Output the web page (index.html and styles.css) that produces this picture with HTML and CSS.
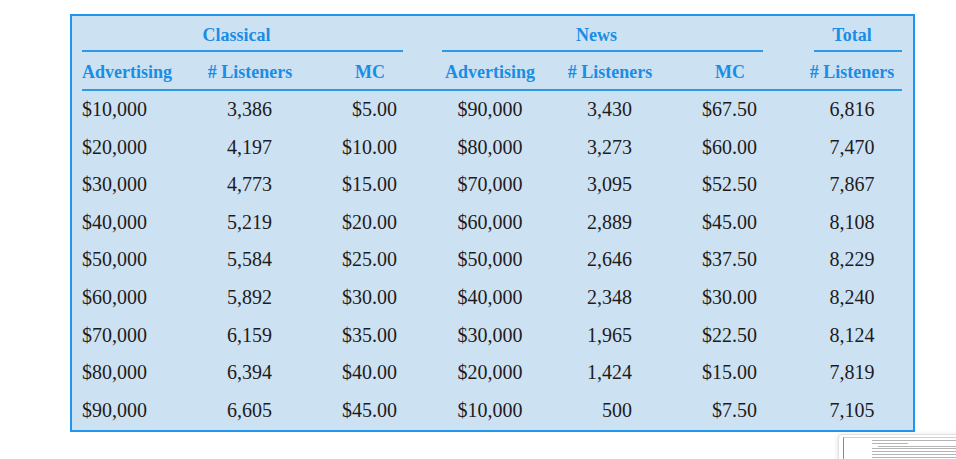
FILE: index.html
```html
<!DOCTYPE html>
<html>
<head>
<meta charset="utf-8">
<link rel="stylesheet" href="styles.css">
</head>
<body>
<div class="page">
  <div class="table">
    <div class="grp g-classical">Classical</div>
    <div class="grp g-news">News</div>
    <div class="grp g-total">Total</div>

    <div class="hd h1">Advertising</div>
    <div class="hd"># Listeners</div>
    <div class="hd">MC</div>
    <div class="hd">Advertising</div>
    <div class="hd"># Listeners</div>
    <div class="hd">MC</div>
    <div class="hd h7"># Listeners</div>

    <div class="c1">$10,000</div><div class="c2">3,386</div><div class="c3">$5.00</div><div class="c4">$90,000</div><div class="c5">3,430</div><div class="c6">$67.50</div><div class="c7">6,816</div>
    <div class="c1">$20,000</div><div class="c2">4,197</div><div class="c3">$10.00</div><div class="c4">$80,000</div><div class="c5">3,273</div><div class="c6">$60.00</div><div class="c7">7,470</div>
    <div class="c1">$30,000</div><div class="c2">4,773</div><div class="c3">$15.00</div><div class="c4">$70,000</div><div class="c5">3,095</div><div class="c6">$52.50</div><div class="c7">7,867</div>
    <div class="c1">$40,000</div><div class="c2">5,219</div><div class="c3">$20.00</div><div class="c4">$60,000</div><div class="c5">2,889</div><div class="c6">$45.00</div><div class="c7">8,108</div>
    <div class="c1">$50,000</div><div class="c2">5,584</div><div class="c3">$25.00</div><div class="c4">$50,000</div><div class="c5">2,646</div><div class="c6">$37.50</div><div class="c7">8,229</div>
    <div class="c1">$60,000</div><div class="c2">5,892</div><div class="c3">$30.00</div><div class="c4">$40,000</div><div class="c5">2,348</div><div class="c6">$30.00</div><div class="c7">8,240</div>
    <div class="c1">$70,000</div><div class="c2">6,159</div><div class="c3">$35.00</div><div class="c4">$30,000</div><div class="c5">1,965</div><div class="c6">$22.50</div><div class="c7">8,124</div>
    <div class="c1">$80,000</div><div class="c2">6,394</div><div class="c3">$40.00</div><div class="c4">$20,000</div><div class="c5">1,424</div><div class="c6">$15.00</div><div class="c7">7,819</div>
    <div class="c1">$90,000</div><div class="c2">6,605</div><div class="c3">$45.00</div><div class="c4">$10,000</div><div class="c5">500</div><div class="c6">$7.50</div><div class="c7">7,105</div>
  </div>

  <div class="thumb">
    <div class="sheet">
      <div class="tl w1"></div>
      <div class="tl w2"></div>
      <div class="tl w3 ind"></div>
      <div class="tl w4"></div>
      <div class="tl w4"></div>
      <div class="tl w4"></div>
      <div class="tl w4"></div>
    </div>
  </div>
</div>
</body>
</html>
```

FILE: styles.css
```css
html, body {
  margin: 0;
  padding: 0;
  background: #ffffff;
  overflow: hidden;
}

.page {
  width: 956px;
  height: 459px;
  padding: 14px 0 0 70px;
  box-sizing: border-box;
  font-family: "Liberation Serif", "Times New Roman", serif;
}

.table {
  width: 845px;
  box-sizing: border-box;
  border: 2px solid #2196ee;
  background: #cce2f3;
  padding: 0 11px 1px 10px;
  display: grid;
  grid-template-columns: 108px repeat(5, 120px) 112px;
  color: #1f1b1c;
  font-size: 20px;
}

.grp {
  color: #1a8de4;
  font-weight: bold;
  font-size: 18px;
  text-align: center;
  padding: 5px 12px 0 0;
  line-height: 29px;
  border-bottom: 2px solid #2d9ae8;
}

.g-classical {
  grid-column: span 3;
  margin-right: 27px;
}

.g-news {
  grid-column: span 3;
  margin-left: 12px;
  margin-right: 27px;
}

.g-total {
  margin-left: 24px;
}

.hd {
  color: #1a8de4;
  font-weight: bold;
  font-size: 18px;
  text-align: center;
  padding-top: 4px;
  line-height: 33px;
  border-bottom: 2px solid #2d9ae8;
  white-space: nowrap;
}

.h1 {
  text-align: left;
}

.h7 {
  padding-left: 12px;
}

.c1, .c2, .c3, .c4, .c5, .c6, .c7 {
  line-height: 37.6px;
  white-space: nowrap;
}

.c1 { text-align: left; }
.c2 { text-align: right; padding-right: 38px; }
.c3 { text-align: right; padding-right: 33px; }
.c4 { text-align: center; }
.c5 { text-align: right; padding-right: 38px; }
.c6 { text-align: right; padding-right: 33px; }
.c7 { text-align: center; padding-left: 12px; }

.thumb {
  position: absolute;
  left: 838px;
  top: 434px;
  width: 140px;
  height: 40px;
  box-sizing: border-box;
  background: #ffffff;
  border: 1px solid #e2e2e2;
  border-radius: 4px 0 0 0;
  box-shadow: -1px 0 4px rgba(0, 0, 0, 0.1);
  padding: 2px 0 0 4px;
}

.sheet {
  height: 100%;
  box-sizing: border-box;
  border-left: 1px solid #8a8a8a;
  border-top: 1px solid #d0d0d0;
  padding: 2px 0 0 28px;
  display: flex;
  flex-direction: column;
  gap: 1.8px;
}

.tl {
  height: 1px;
  flex: none;
  background: #b4b4b4;
}

.w1 { width: 100px; }
.w2 { width: 36px; }
.w3 { width: 90px; }
.w4 { width: 100px; }
.ind { margin-left: 6px; }
```
